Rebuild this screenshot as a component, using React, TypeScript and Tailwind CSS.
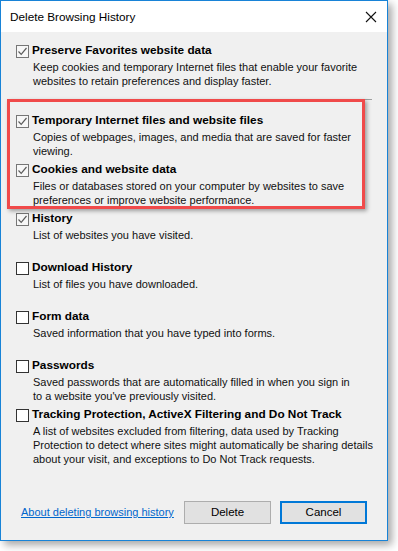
import React from "react";

type Item = {
  title: string;
  lines: string[];
  checked: boolean;
};

const preserve: Item = {
  title: "Preserve Favorites website data",
  lines: [
    "Keep cookies and temporary Internet files that enable your favorite",
    "websites to retain preferences and display faster.",
  ],
  checked: true,
};

const items: Item[] = [
  {
    title: "Temporary Internet files and website files",
    lines: ["Copies of webpages, images, and media that are saved for faster", "viewing."],
    checked: true,
  },
  {
    title: "Cookies and website data",
    lines: [
      "Files or databases stored on your computer by websites to save",
      "preferences or improve website performance.",
    ],
    checked: true,
  },
  { title: "History", lines: ["List of websites you have visited."], checked: true },
  { title: "Download History", lines: ["List of files you have downloaded."], checked: false },
  { title: "Form data", lines: ["Saved information that you have typed into forms."], checked: false },
  {
    title: "Passwords",
    lines: [
      "Saved passwords that are automatically filled in when you sign in",
      "to a website you've previously visited.",
    ],
    checked: false,
  },
  {
    title: "Tracking Protection, ActiveX Filtering and Do Not Track",
    lines: [
      "A list of websites excluded from filtering, data used by Tracking",
      "Protection to detect where sites might automatically be sharing details",
      "about your visit, and exceptions to Do Not Track requests.",
    ],
    checked: false,
  },
];

const CheckBox = ({ checked }: { checked: boolean }) =>
  checked ? (
    <div className="w-[13px] h-[13px] border border-[#767676] bg-[#f7f7f7] flex items-center justify-center shrink-0">
      <svg width="11" height="11" viewBox="0 0 11 11">
        <path d="M1.5 5.5 L4.2 8.3 L9.5 2" fill="none" stroke="#5c5c5c" strokeWidth="1.2" />
      </svg>
    </div>
  ) : (
    <div className="w-[13px] h-[13px] border border-[#333333] bg-white shrink-0" />
  );

const Option = ({ item }: { item: Item }) => (
  <div className="h-[49px]">
    <div className="flex items-center gap-[3px] h-[16px]">
      <CheckBox checked={item.checked} />
      <span className="font-bold text-[11.8px] text-black whitespace-nowrap">{item.title}</span>
    </div>
    <div className="pl-[17px] pt-[1px] text-[11px] leading-[14px] text-[#111] whitespace-nowrap">
      {item.lines.map((l) => (
        <div key={l}>{l}</div>
      ))}
    </div>
  </div>
);

export default function App() {
  return (
    <div
      className="w-[398px] h-[551px] bg-white"
      style={{ fontFamily: '"Segoe UI", "Liberation Sans", Arial, sans-serif' }}
    >
      <div className="relative w-[388px] h-[541px] border border-[#1883d7] bg-[#f0f0f0] flex flex-col shadow-[4px_4px_8px_rgba(0,0,0,0.35)]">
        <div className="h-[31px] bg-white flex items-center justify-between pl-[9px] pr-[10px]">
          <span className="text-[11.75px] text-black">Delete Browsing History</span>
          <svg width="12" height="12" viewBox="0 0 12 12">
            <path d="M1 1 L11 11 M11 1 L1 11" stroke="#111" strokeWidth="1.1" />
          </svg>
        </div>

        <div className="px-[15px] pt-[11px] flex-1">
          <Option item={preserve} />
          <div className="h-px bg-[#a0a0a0] mt-[7px] mb-[13px]" />
          {items.map((it) => (
            <Option key={it.title} item={it} />
          ))}
        </div>

        <div className="flex items-center px-[20px] pb-[16px] gap-[9px]">
          <a className="text-[11px] text-[#0066cc] underline mr-auto whitespace-nowrap">
            About deleting browsing history
          </a>
          <button className="w-[87px] h-[23px] bg-[#e1e1e1] border border-[#adadad] text-[11.5px] text-black">
            Delete
          </button>
          <button className="w-[87px] h-[23px] bg-[#e1e1e1] border-2 border-[#0078d7] text-[11.5px] text-black">
            Cancel
          </button>
        </div>

        <div className="absolute left-[6px] top-[98px] w-[358px] h-[110px] border-[3px] border-[#f04a4a] shadow-[2px_2px_4px_rgba(0,0,0,0.35)] pointer-events-none" />
      </div>
    </div>
  );
}
